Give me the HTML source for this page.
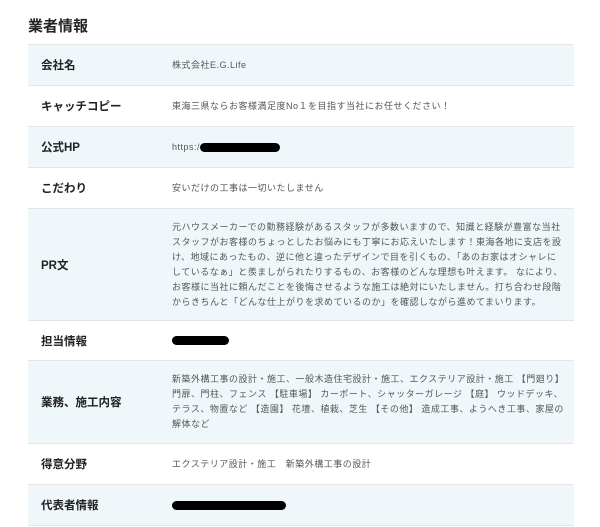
<!DOCTYPE html>
<html><head><meta charset="utf-8"><style>
body{margin:0;background:#fff;font-family:"Liberation Sans","Noto Sans CJK JP",sans-serif;width:600px;height:527px;overflow:hidden;position:relative}
h2{position:absolute;left:28px;top:15px;margin:0;font-size:15px;font-weight:bold;color:#222}
.t{position:absolute;left:28px;top:44px;width:546px;border-top:1px solid #e2e6e8}
.r{display:flex;align-items:center;border-bottom:1px solid #e2e6e8;box-sizing:border-box}
.r.b{background:#eff7fa}
.l{width:144px;padding-left:13px;box-sizing:border-box;font-size:11.5px;font-weight:bold;color:#222}
.v{flex:1;font-size:9px;letter-spacing:0.5px;color:#555;line-height:15px;white-space:nowrap}
.bl{display:inline-block;background:#000;border-radius:6px;height:9px;vertical-align:middle}
</style></head><body>
<h2>業者情報</h2>
<div class="t">
<div class="r b" style="height:41px"><div class="l">会社名</div><div class="v">株式会社E.G.Life</div></div>
<div class="r" style="height:41px"><div class="l">キャッチコピー</div><div class="v">東海三県ならお客様満足度No１を目指す当社にお任せください！</div></div>
<div class="r b" style="height:41px"><div class="l">公式HP</div><div class="v">https:/<span class="bl" style="width:80px"></span></div></div>
<div class="r" style="height:41px"><div class="l">こだわり</div><div class="v">安いだけの工事は一切いたしません</div></div>
<div class="r b" style="height:112px"><div class="l">PR文</div><div class="v">元ハウスメーカーでの勤務経験があるスタッフが多数いますので、知識と経験が豊富な当社<br>スタッフがお客様のちょっとしたお悩みにも丁寧にお応えいたします！東海各地に支店を設<br>け、地域にあったもの、逆に他と違ったデザインで目を引くもの、「あのお家はオシャレに<br>しているなぁ」と羨ましがられたりするもの、お客様のどんな理想も叶えます。 なにより、<br>お客様に当社に頼んだことを後悔させるような施工は絶対にいたしません。打ち合わせ段階<br>からきちんと「どんな仕上がりを求めているのか」を確認しながら進めてまいります。</div></div>
<div class="r" style="height:40px"><div class="l">担当情報</div><div class="v"><span class="bl" style="width:57px"></span></div></div>
<div class="r b" style="height:83px"><div class="l">業務、施工内容</div><div class="v">新築外構工事の設計・施工、一般木造住宅設計・施工、エクステリア設計・施工 【門廻り】<br>門扉、門柱、フェンス 【駐車場】 カーポート、シャッターガレージ 【庭】 ウッドデッキ、<br>テラス、物置など 【造園】 花壇、植栽、芝生 【その他】 造成工事、ようへき工事、家屋の<br>解体など</div></div>
<div class="r" style="height:41px"><div class="l">得意分野</div><div class="v">エクステリア設計・施工　新築外構工事の設計</div></div>
<div class="r b" style="height:41px"><div class="l">代表者情報</div><div class="v"><span class="bl" style="width:114px"></span></div></div>
</div>
</body></html>
